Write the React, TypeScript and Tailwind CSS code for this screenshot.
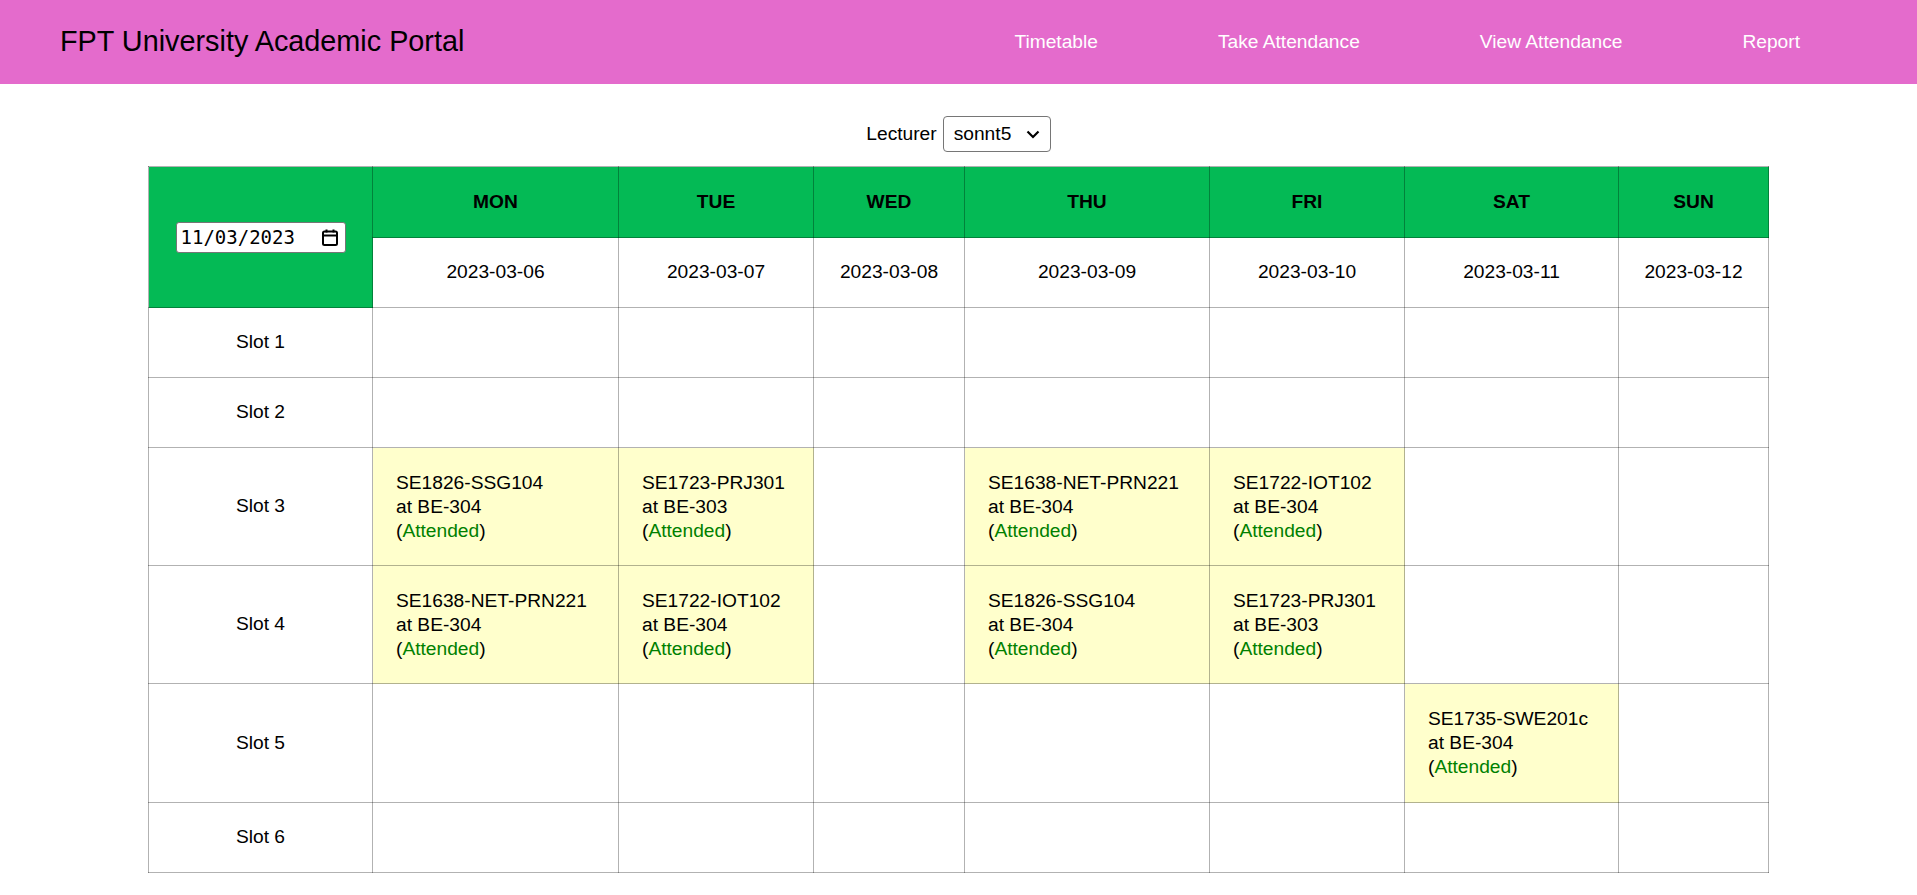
import React from "react";

type Session = { code: string; room: string };

const days = [
  { name: "MON", date: "2023-03-06" },
  { name: "TUE", date: "2023-03-07" },
  { name: "WED", date: "2023-03-08" },
  { name: "THU", date: "2023-03-09" },
  { name: "FRI", date: "2023-03-10" },
  { name: "SAT", date: "2023-03-11" },
  { name: "SUN", date: "2023-03-12" },
];

// slot -> day index -> session
const schedule: Record<number, Record<number, Session>> = {
  3: {
    0: { code: "SE1826-SSG104", room: "BE-304" },
    1: { code: "SE1723-PRJ301", room: "BE-303" },
    3: { code: "SE1638-NET-PRN221", room: "BE-304" },
    4: { code: "SE1722-IOT102", room: "BE-304" },
  },
  4: {
    0: { code: "SE1638-NET-PRN221", room: "BE-304" },
    1: { code: "SE1722-IOT102", room: "BE-304" },
    3: { code: "SE1826-SSG104", room: "BE-304" },
    4: { code: "SE1723-PRJ301", room: "BE-303" },
  },
  5: {
    5: { code: "SE1735-SWE201c", room: "BE-304" },
  },
};

const rowHeight: Record<number, string> = {
  1: "h-[70px]",
  2: "h-[70px]",
  3: "h-[118px]",
  4: "h-[118px]",
  5: "h-[119px]",
  6: "h-[70px]",
};

const cell = "border border-black/30";

function Header() {
  return (
    <header className="h-[84px] bg-[#e46bcc] flex items-center justify-between pl-[60px] pr-[117px]">
      <h1 className="text-[28.8px] text-black">FPT University Academic Portal</h1>
      <nav className="flex gap-[120px] text-white">
        <a href="#">Timetable</a>
        <a href="#">Take Attendance</a>
        <a href="#">View Attendance</a>
        <a href="#">Report</a>
      </nav>
    </header>
  );
}

function DateBox() {
  return (
    <div className="inline-flex items-center justify-between w-[170px] h-[31px] bg-white border border-[#767676] rounded-[3px] pl-[4px] pr-[7px]">
      <span className="font-['DejaVu_Sans_Mono',monospace] text-[19px] leading-none">11/03/2023</span>
      <svg width="16" height="17" viewBox="0 0 16 17" fill="none">
        <rect x="1" y="2.5" width="14" height="13.5" rx="1.5" stroke="black" strokeWidth="2" />
        <path d="M1 6.5h14" stroke="black" strokeWidth="2" />
        <path d="M4.5 0.5v3M11.5 0.5v3" stroke="black" strokeWidth="2" />
      </svg>
    </div>
  );
}

export default function App() {
  return (
    <div className="min-h-screen bg-white text-black font-['Liberation_Sans',Arial,sans-serif] text-[19.2px]">
      <Header />

      <div className="flex items-center justify-center gap-[6px] mt-[32px] mb-[14px]">
        <span>Lecturer</span>
        <div className="relative">
          <select className="appearance-none w-[108px] h-[36px] border border-[#767676] rounded-[4px] bg-white pl-[10px] text-[19.2px]">
            <option>sonnt5</option>
          </select>
          <svg className="absolute right-[11px] top-[14px] pointer-events-none" width="14" height="9" viewBox="0 0 14 9" fill="none">
            <path d="M1.5 1.5l5.5 5.5 5.5-5.5" stroke="black" strokeWidth="2.2" />
          </svg>
        </div>
      </div>

      <table className="mx-auto border-collapse table-fixed w-[1620px]">
        <colgroup>
          <col className="w-[224px]" />
          <col className="w-[246px]" />
          <col className="w-[195px]" />
          <col className="w-[151px]" />
          <col className="w-[245px]" />
          <col className="w-[195px]" />
          <col className="w-[214px]" />
          <col className="w-[150px]" />
        </colgroup>
        <thead>
          <tr className="h-[71px]">
            <th rowSpan={2} className={`${cell} bg-[#04ba55] font-normal`}>
              <DateBox />
            </th>
            {days.map((d) => (
              <th key={d.name} className={`${cell} bg-[#04ba55] font-bold`}>
                {d.name}
              </th>
            ))}
          </tr>
          <tr className="h-[70px]">
            {days.map((d) => (
              <td key={d.date} className={`${cell} text-center`}>
                {d.date}
              </td>
            ))}
          </tr>
        </thead>
        <tbody>
          {[1, 2, 3, 4, 5, 6].map((slot) => {
            const row = schedule[slot] || {};
            return (
              <tr key={slot} className={rowHeight[slot]}>
                <td className={`${cell} text-center`}>Slot {slot}</td>
                {days.map((d, i) => {
                  const s = row[i];
                  if (!s) return <td key={d.name} className={cell}></td>;
                  return (
                    <td key={d.name} className={`${cell} bg-[#ffffcc] px-[23px] leading-[24px] align-middle`}>
                      <div>{s.code}</div>
                      <div>at {s.room}</div>
                      <div>
                        (<span className="text-[#008000]">Attended</span>)
                      </div>
                    </td>
                  );
                })}
              </tr>
            );
          })}
        </tbody>
      </table>
      <div className="h-[25px]" />
    </div>
  );
}
